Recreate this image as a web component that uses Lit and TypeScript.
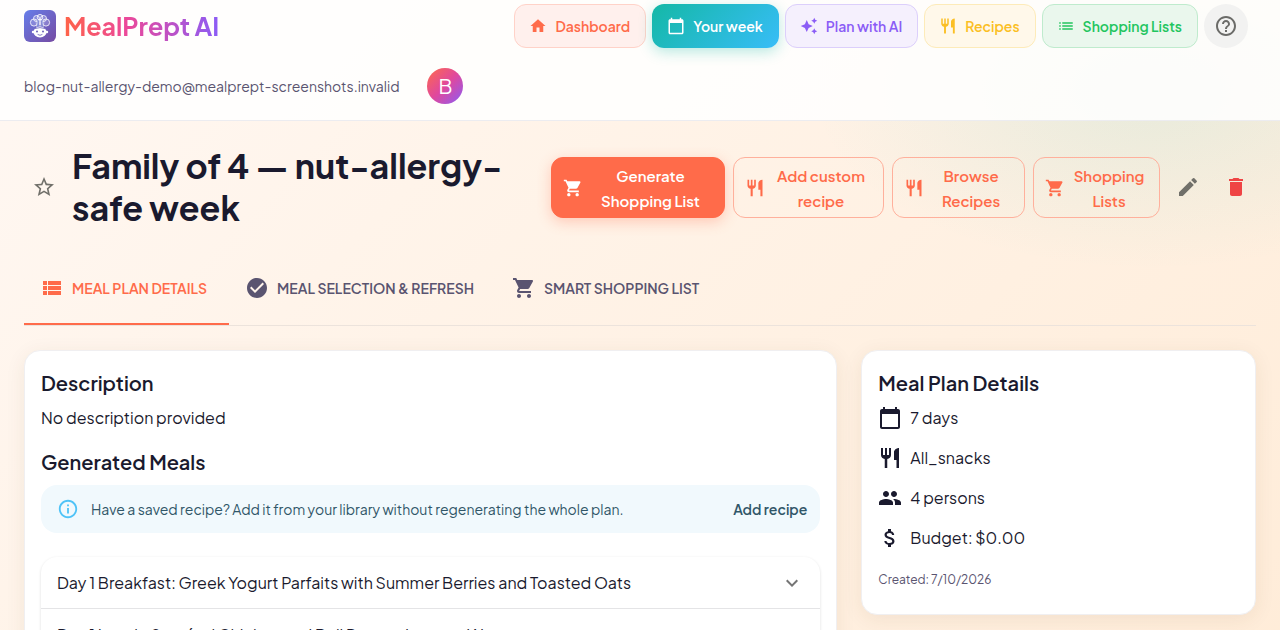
import { LitElement, html, css, svg } from "lit";
import { customElement, property, state } from "lit/decorators.js";
import { classMap } from "lit/directives/class-map.js";

const ICONS: Record<string, string> = {
  home: "M10 20v-6h4v6h5v-8h3L12 3 2 12h3v8z",
  calendar: "M20 3h-1V1h-2v2H7V1H5v2H4c-1.1 0-2 .9-2 2v16c0 1.1.9 2 2 2h16c1.1 0 2-.9 2-2V5c0-1.1-.9-2-2-2zm0 18H4V8h16v13z",
  sparkle: "m19 9 1.25-2.75L23 5l-2.75-1.25L19 1l-1.25 2.75L15 5l2.75 1.25zm0 6-1.25 2.75L15 19l2.75 1.25L19 23l1.25-2.75L23 19l-2.75-1.25zm-7.5-5.5L9 4 6.5 9.5 1 12l5.5 2.5L9 20l2.5-5.5L17 12z",
  restaurant: "M11 9H9V2H7v7H5V2H3v7c0 2.12 1.66 3.84 3.75 3.97V22h2.5v-9.03C11.34 12.84 13 11.12 13 9V2h-2v7zm5-3v8h2.5v8H21V2c-2.76 0-5 2.24-5 4z",
  list: "M3 13h2v-2H3v2zm0 4h2v-2H3v2zm0-8h2V7H3v2zm4 4h14v-2H7v2zm0 4h14v-2H7v2zM7 7v2h14V7H7z",
  help: "M11 18h2v-2h-2v2zm1-16C6.48 2 2 6.48 2 12s4.48 10 10 10 10-4.48 10-10S17.52 2 12 2zm0 18c-4.41 0-8-3.59-8-8s3.59-8 8-8 8 3.59 8 8-3.59 8-8 8zm0-14c-2.21 0-4 1.79-4 4h2c0-1.1.9-2 2-2s2 .9 2 2c0 2-3 1.75-3 5h2c0-2.25 3-2.5 3-5 0-2.21-1.79-4-4-4z",
  star: "m22 9.24-7.19-.62L12 2 9.19 8.63 2 9.24l5.46 4.73L5.82 21 12 17.27 18.18 21l-1.63-7.03L22 9.24zM12 15.4l-3.76 2.27 1-4.28-3.32-2.88 4.38-.38L12 6.1l1.71 4.04 4.38.38-3.32 2.88 1 4.28L12 15.4z",
  cart: "M7 18c-1.1 0-1.99.9-1.99 2S5.9 22 7 22s2-.9 2-2-.9-2-2-2zM1 2v2h2l3.6 7.59-1.35 2.45c-.16.28-.25.61-.25.96 0 1.1.9 2 2 2h12v-2H7.42c-.14 0-.25-.11-.25-.25l.03-.12.9-1.63h7.45c.75 0 1.41-.41 1.75-1.03l3.58-6.49c.08-.14.12-.31.12-.48 0-.55-.45-1-1-1H5.21l-.94-2H1zm16 16c-1.1 0-1.99.9-1.99 2s.89 2 1.99 2 2-.9 2-2-.9-2-2-2z",
  edit: "M3 17.25V21h3.75L17.81 9.94l-3.75-3.75L3 17.25zM20.71 7.04c.39-.39.39-1.02 0-1.41l-2.34-2.34a.9959.9959 0 0 0-1.41 0l-1.83 1.83 3.75 3.75 1.83-1.83z",
  trash: "M6 19c0 1.1.9 2 2 2h8c1.1 0 2-.9 2-2V7H6v12zM19 4h-3.5l-1-1h-5l-1 1H5v2h14V4z",
  viewList: "M3 14h4v-4H3v4zm0 5h4v-4H3v4zM3 9h4V5H3v4zm5 5h13v-4H8v4zm0 5h13v-4H8v4zM8 5v4h13V5H8z",
  check: "M12 2C6.48 2 2 6.48 2 12s4.48 10 10 10 10-4.48 10-10S17.52 2 12 2zm-2 15-5-5 1.41-1.41L10 14.17l7.59-7.59L19 8l-9 9z",
  info: "M11 7h2v2h-2zm0 4h2v6h-2zm1-9C6.48 2 2 6.48 2 12s4.48 10 10 10 10-4.48 10-10S17.52 2 12 2zm0 18c-4.41 0-8-3.59-8-8s3.59-8 8-8 8 3.59 8 8-3.59 8-8 8z",
  chevron: "M16.59 8.59 12 13.17 7.41 8.59 6 10l6 6 6-6z",
  group: "M16 11c1.66 0 2.99-1.34 2.99-3S17.66 5 16 5c-1.66 0-3 1.34-3 3s1.34 3 3 3zm-8 0c1.66 0 2.99-1.34 2.99-3S9.66 5 8 5C6.34 5 5 6.34 5 8s1.34 3 3 3zm0 2c-2.33 0-7 1.17-7 3.5V19h14v-2.5c0-2.33-4.67-3.5-7-3.5zm8 0c-.29 0-.62.02-.97.05 1.16.84 1.97 1.97 1.97 3.45V19h6v-2.5c0-2.33-4.67-3.5-7-3.5z",
  dollar: "M11.8 10.9c-2.27-.59-3-1.2-3-2.15 0-1.09 1.01-1.85 2.7-1.85 1.78 0 2.44.85 2.5 2.1h2.21c-.07-1.72-1.12-3.3-3.21-3.81V3h-3v2.16c-1.94.42-3.5 1.68-3.5 3.61 0 2.31 1.91 3.46 4.7 4.13 2.5.6 3 1.48 3 2.41 0 .69-.49 1.79-2.7 1.79-2.06 0-2.87-.92-2.98-2.1h-2.2c.12 2.19 1.76 3.42 3.68 3.83V21h3v-2.15c1.95-.37 3.5-1.5 3.5-3.55 0-2.84-2.43-3.81-4.7-4.4z",
};

@customElement("ui-icon")
class UiIcon extends LitElement {
  @property() name = "";
  static styles = css`
    :host { display: block; flex: none; width: 24px; height: 24px; }
    .glyph { display: block; width: 100%; height: 100%; fill: currentColor; }
  `;
  render() {
    return html`<svg class="glyph" viewBox="0 0 24 24" aria-hidden="true">${svg`<path d=${ICONS[this.name] ?? ""}></path>`}</svg>`;
  }
}

@customElement("brand-logo")
class BrandLogo extends LitElement {
  static styles = css`
    :host { display: block; flex: none; width: 32px; height: 32px; }
    .mark { display: block; width: 100%; height: 100%; }
  `;
  render() {
    return html`<svg class="mark" viewBox="0 0 32 32" aria-hidden="true">
      <defs>
        <linearGradient id="bg" x1="0" y1="0" x2="1" y2="1">
          <stop offset="0" stop-color="#667eea"></stop>
          <stop offset="1" stop-color="#764ba2"></stop>
        </linearGradient>
      </defs>
      <rect width="32" height="32" rx="6" fill="url(#bg)"></rect>
      <g fill="#fff" fill-opacity=".18" stroke="#fff" stroke-opacity=".9" stroke-width=".9">
        <circle cx="10" cy="12.5" r="3.6"></circle>
        <circle cx="22" cy="12.5" r="3.6"></circle>
        <circle cx="12.5" cy="8.5" r="3"></circle>
        <circle cx="19.5" cy="8.5" r="3"></circle>
        <circle cx="16" cy="7.2" r="2.8"></circle>
      </g>
      <path d="M11.5 11.5h9l-.7 6h-7.6z" fill="#fff" fill-opacity=".35"></path>
      <path d="M14 10v7M18 10v7" stroke="#667ad0" stroke-width=".9"></path>
      <path d="M16 9v6" stroke="#fff" stroke-width="1.2"></path>
      <ellipse cx="16" cy="22" rx="6.6" ry="5.4" fill="#fff"></ellipse>
      <path d="M9.8 18.8q6.2-2.4 12.4 0" fill="none" stroke="#6a63c0" stroke-width=".8"></path>
      <circle cx="9" cy="22" r="1.2" fill="#fff"></circle>
      <circle cx="23" cy="22" r="1.2" fill="#fff"></circle>
      <circle cx="13" cy="21.6" r="1" fill="#6a60b8"></circle>
      <circle cx="19" cy="21.6" r="1" fill="#6a60b8"></circle>
      <path d="M13.6 24.4q2.4 1.8 4.8 0" fill="none" stroke="#6a60b8" stroke-width=".8"></path>
    </svg>`;
  }
}

@customElement("app-root")
class AppRoot extends LitElement {
  @state() private tab = 0;

  static styles = css`
    :host {
      display: block;
      min-height: 100vh;
      color: #1a1a2e;
      font-family: "Plus Jakarta Sans", Inter, "Open Sans", sans-serif;
      font-size: 16px;
      line-height: 24px;
      background:
        radial-gradient(ellipse 340px 180px at 1150px 90px, rgba(20, 184, 166, 0.1), transparent),
        linear-gradient(135deg, #fff8f3 0%, #fff4ea 30%, #ffecd8 100%) #fff4ea;
    }
    *, *::before { box-sizing: border-box; }
    h1, h2, p, ul { margin: 0; padding: 0; }
    button { font: inherit; border: 0; background: none; padding: 0; cursor: pointer; color: inherit; }
    a { text-decoration: none; color: inherit; }

    .header {
      display: flex;
      flex-wrap: wrap;
      justify-content: space-between;
      align-items: center;
      row-gap: 16px;
      padding: 4px 24px 16px;
      background: rgba(255, 255, 255, 0.85);
      border-bottom: 1px solid #ececf0;
    }
    .brand { display: flex; align-items: center; gap: 8px; }
    .brand-name {
      font-size: 25px;
      line-height: 32px;
      font-weight: 700;
      background: linear-gradient(90deg, #ff6347, #ec4899 40%, #8b5cf6);
      background-clip: text;
      -webkit-background-clip: text;
      color: transparent;
    }
    .nav { display: flex; gap: 6px; padding-right: 8px; }
    .nav-link {
      display: flex;
      align-items: center;
      gap: 8px;
      height: 44px;
      padding: 0 15px 0 14px;
      border: 1px solid;
      border-radius: 12px;
      font-size: 14px;
      font-weight: 600;
      white-space: nowrap;
    }
    .nav-link ui-icon { width: 18px; height: 18px; }
    .coral { color: #ff6b4a; background: #fff0ed; border-color: #ffd2c8; }
    .active {
      color: #fff;
      border-color: transparent;
      background: linear-gradient(135deg, #14b8a6, #38bdf8) border-box;
      box-shadow: 0 4px 14px rgba(20, 184, 166, 0.3);
    }
    .violet { color: #8b5cf6; background: #f5f0fd; border-color: #dccffb; }
    .amber { color: #fbbf24; background: #fff8ea; border-color: #fdebb9; }
    .green { color: #22c55e; background: #eaf7ed; border-color: #bfebcd; }
    .help {
      display: grid;
      place-items: center;
      width: 44px;
      height: 44px;
      border-radius: 50%;
      background: #f2f2f1;
      color: #6b6b68;
    }
    .account { display: flex; align-items: center; gap: 28px; padding-top: 4px; }
    .email { font-size: 14px; color: #5a5470; }
    .avatar {
      display: grid;
      place-items: center;
      width: 36px;
      height: 36px;
      border-radius: 50%;
      color: #fff;
      font-size: 20px;
      background: linear-gradient(135deg, #ff6b4a, #e0489d 50%, #8b5cf6);
    }

    .main { padding: 24px; }
    .title-row { display: flex; align-items: center; gap: 8px; }
    .title-group { display: flex; flex: 1; align-items: center; gap: 8px; min-width: 0; }
    .title { font-size: 34px; line-height: 42px; font-weight: 700; }
    .icon-btn { display: grid; place-items: center; flex: none; width: 40px; height: 40px; color: #71706a; }
    .danger { color: #ef4444; }
    .actions { display: flex; align-items: center; gap: 8px; }
    .action {
      display: flex;
      align-items: center;
      gap: 8px;
      padding: 5px 14px 4px 11px;
      border: 1px solid #ffb09c;
      border-radius: 12px;
      color: #ff6b4a;
      font-size: 15px;
      line-height: 25px;
      font-weight: 600;
    }
    .action ui-icon { width: 20px; height: 20px; }
    .action-label { flex: 1; text-align: center; }
    .w-xl { width: 174px; }
    .w-lg { width: 151px; }
    .w-md { width: 133px; }
    .w-sm { width: 127px; }
    .filled {
      color: #fff;
      background: #ff6b4a;
      border-color: #ff6b4a;
      box-shadow: 0 4px 14px rgba(255, 107, 74, 0.3);
    }
    .icon-actions { display: flex; gap: 8px; }

    .tabs { display: flex; margin-top: 24px; border-bottom: 1px solid #ece3dc; }
    .tab {
      display: flex;
      align-items: center;
      gap: 8px;
      height: 72px;
      padding: 0 22px 0 16px;
      border-bottom: 2px solid transparent;
      color: #5a5470;
      font-size: 14px;
      font-weight: 600;
      text-transform: uppercase;
    }
    .tab.selected { color: #ff6b4a; border-bottom-color: #ff6b4a; }

    .grid { display: grid; grid-template-columns: repeat(12, 1fr); gap: 24px; align-items: start; margin-top: 24px; }
    .card {
      padding: 16px;
      background: #fff;
      border: 1px solid #f0eff1;
      border-radius: 16px;
      box-shadow: 0 4px 20px rgba(90, 60, 30, 0.08);
    }
    .wide { grid-column: span 8; }
    .narrow { grid-column: span 4; padding-bottom: 22px; }
    .heading { font-size: 20px; line-height: 32px; font-weight: 600; }
    .description { margin: 7px 0 16px; }
    .notice {
      display: flex;
      align-items: center;
      gap: 12px;
      height: 48px;
      margin: 7px 0 24px;
      padding: 0 13px 0 16px;
      border-radius: 16px;
      background: #f1f9fd;
      color: #305668;
      font-size: 14px;
    }
    .notice ui-icon { width: 22px; height: 22px; color: #4fc3f7; }
    .notice-text { flex: 1; }
    .notice-btn { font-weight: 600; }
    .meals { list-style: none; border-radius: 16px; box-shadow: 0 1px 3px rgba(0, 0, 0, 0.14); }
    .meal + .meal { border-top: 1px solid #e4e4e6; }
    .meal-btn {
      display: flex;
      align-items: center;
      justify-content: space-between;
      width: 100%;
      height: 51px;
      padding: 0 16px;
      text-align: left;
    }
    .meal-btn ui-icon { color: #757575; }
    .facts { list-style: none; display: grid; gap: 16px; margin-top: 7px; }
    .fact { display: flex; align-items: center; gap: 8px; }
    .created { margin-top: 18px; font-size: 12px; color: #5a5470; }
  `;

  render() {
    const nav = [
      ["home", "Dashboard", "coral"],
      ["calendar", "Your week", "active"],
      ["sparkle", "Plan with AI", "violet"],
      ["restaurant", "Recipes", "amber"],
      ["list", "Shopping Lists", "green"],
    ];
    const actions = [
      ["cart", "Generate Shopping List", "w-xl filled"],
      ["restaurant", "Add custom recipe", "w-lg"],
      ["restaurant", "Browse Recipes", "w-md"],
      ["cart", "Shopping Lists", "w-sm"],
    ];
    const tabs = [
      ["viewList", "Meal Plan Details"],
      ["check", "Meal Selection & Refresh"],
      ["cart", "Smart Shopping List"],
    ];
    const meals = [
      "Day 1 Breakfast: Greek Yogurt Parfaits with Summer Berries and Toasted Oats",
      "Day 1 Lunch: Sautéed Chicken and Bell Pepper Lettuce Wraps",
    ];
    const facts = [
      ["calendar", "7 days"],
      ["restaurant", "All_snacks"],
      ["group", "4 persons"],
      ["dollar", "Budget: $0.00"],
    ];
    return html`
      <header class="header">
        <a class="brand" href="#"><brand-logo></brand-logo><span class="brand-name">MealPrept AI</span></a>
        <nav class="nav" aria-label="Main">
          ${nav.map(([i, t, c]) => html`<a class="nav-link ${c}" href="#"><ui-icon name=${i}></ui-icon>${t}</a>`)}
          <button class="help" aria-label="Help"><ui-icon name="help"></ui-icon></button>
        </nav>
        <div class="account">
          <span class="email">blog-nut-allergy-demo@mealprept-screenshots.invalid</span>
          <button class="avatar" aria-label="Account">B</button>
        </div>
      </header>
      <main class="main">
        <div class="title-row">
          <div class="title-group">
            <button class="icon-btn" aria-label="Favorite"><ui-icon name="star"></ui-icon></button>
            <h1 class="title">Family of 4 — nut-allergy-safe week</h1>
          </div>
          <div class="actions">
            ${actions.map(([i, t, c]) => html`<button class="action ${c}"><ui-icon name=${i}></ui-icon><span class="action-label">${t}</span></button>`)}
          </div>
          <div class="icon-actions">
            <button class="icon-btn" aria-label="Edit"><ui-icon name="edit"></ui-icon></button>
            <button class="icon-btn danger" aria-label="Delete"><ui-icon name="trash"></ui-icon></button>
          </div>
        </div>
        <div class="tabs" role="tablist">
          ${tabs.map(([i, t], n) => html`<button role="tab" aria-selected=${n === this.tab ? "true" : "false"}
            class=${classMap({ tab: true, selected: n === this.tab })}
            @click=${() => (this.tab = n)}><ui-icon name=${i}></ui-icon>${t}</button>`)}
        </div>
        <div class="grid">
          <section class="card wide">
            <h2 class="heading">Description</h2>
            <p class="description">No description provided</p>
            <h2 class="heading">Generated Meals</h2>
            <div class="notice">
              <ui-icon name="info"></ui-icon>
              <span class="notice-text">Have a saved recipe? Add it from your library without regenerating the whole plan.</span>
              <button class="notice-btn">Add recipe</button>
            </div>
            <ul class="meals">
              ${meals.map((m) => html`<li class="meal"><button class="meal-btn" aria-expanded="false">${m}<ui-icon name="chevron"></ui-icon></button></li>`)}
            </ul>
          </section>
          <section class="card narrow">
            <h2 class="heading">Meal Plan Details</h2>
            <ul class="facts">
              ${facts.map(([i, t]) => html`<li class="fact"><ui-icon name=${i}></ui-icon>${t}</li>`)}
            </ul>
            <p class="created">Created: 7/10/2026</p>
          </section>
        </div>
      </main>
    `;
  }
}
